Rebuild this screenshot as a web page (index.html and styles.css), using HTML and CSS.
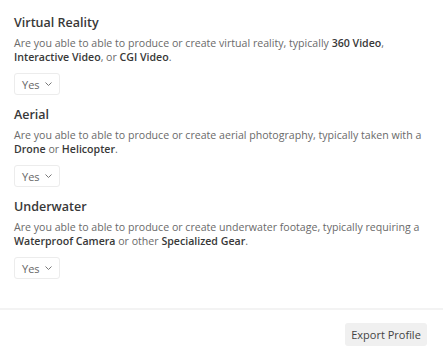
FILE: index.html
```html
<!DOCTYPE html>
<html lang="en">
<head>
    <meta charset="UTF-8">
    <meta name="viewport" content="width=device-width, initial-scale=1.0">
    <title>Capabilities</title>
    <link rel="stylesheet" href="styles.css">
</head>
<body>
    <div class="questions">
        <div class="question">
            <h3>Virtual Reality</h3>
            <p>Are you able to able to produce or create virtual reality, typically <b>360 Video</b>, <b>Interactive Video</b>, or <b>CGI Video</b>.</p>
            <button class="select">Yes
                <svg width="7" height="4" viewBox="0 0 7 4"><path d="M0.5 0.5l3 3 3-3" fill="none" stroke="#777" stroke-width="1"/></svg>
            </button>
        </div>

        <div class="question">
            <h3>Aerial</h3>
            <p>Are you able to able to produce or create aerial photography, typically taken with a <b>Drone</b> or <b>Helicopter</b>.</p>
            <button class="select">Yes
                <svg width="7" height="4" viewBox="0 0 7 4"><path d="M0.5 0.5l3 3 3-3" fill="none" stroke="#777" stroke-width="1"/></svg>
            </button>
        </div>

        <div class="question">
            <h3>Underwater</h3>
            <p>Are you able to able to produce or create underwater footage, typically requiring a <b>Waterproof Camera</b> or other <b>Specialized Gear</b>.</p>
            <button class="select">Yes
                <svg width="7" height="4" viewBox="0 0 7 4"><path d="M0.5 0.5l3 3 3-3" fill="none" stroke="#777" stroke-width="1"/></svg>
            </button>
        </div>
    </div>

    <div class="footer">
        <button class="export">Export Profile</button>
    </div>
</body>
</html>
```

FILE: styles.css
```css
body {
    margin: 0;
    padding: 0;
    font-family: "Open Sans", Arial, sans-serif;
    background-color: #ffffff;
    color: #444;
}

.questions {
    padding: 14px 14px 0 14px;
    height: 308px;
    box-sizing: border-box;
}

.question {
    margin-bottom: 11px;
}

.question h3 {
    margin: 0 0 4px 0;
    font-size: 12.5px;
    font-weight: 600;
    color: #383838;
    line-height: 18px;
}

.question p {
    margin: 0 0 9px 0;
    font-size: 10.6px;
    line-height: 14px;
    color: #6a6a6a;
}

.question p b {
    color: #383838;
    font-weight: 600;
}

.select {
    display: flex;
    align-items: center;
    gap: 5px;
    height: 22px;
    padding: 0 7px;
    font-family: inherit;
    font-size: 11px;
    color: #666;
    background-color: #fff;
    border: 1px solid #ececec;
    border-radius: 3px;
}

.footer {
    border-top: 2px solid #f3f3f3;
    padding: 13px 16px;
    display: flex;
    justify-content: flex-end;
}

.export {
    height: 23px;
    width: 82px;
    padding: 0;
    font-family: inherit;
    font-size: 11px;
    color: #444;
    background-color: #f0f0f0;
    border: none;
    border-radius: 3px;
}
```
